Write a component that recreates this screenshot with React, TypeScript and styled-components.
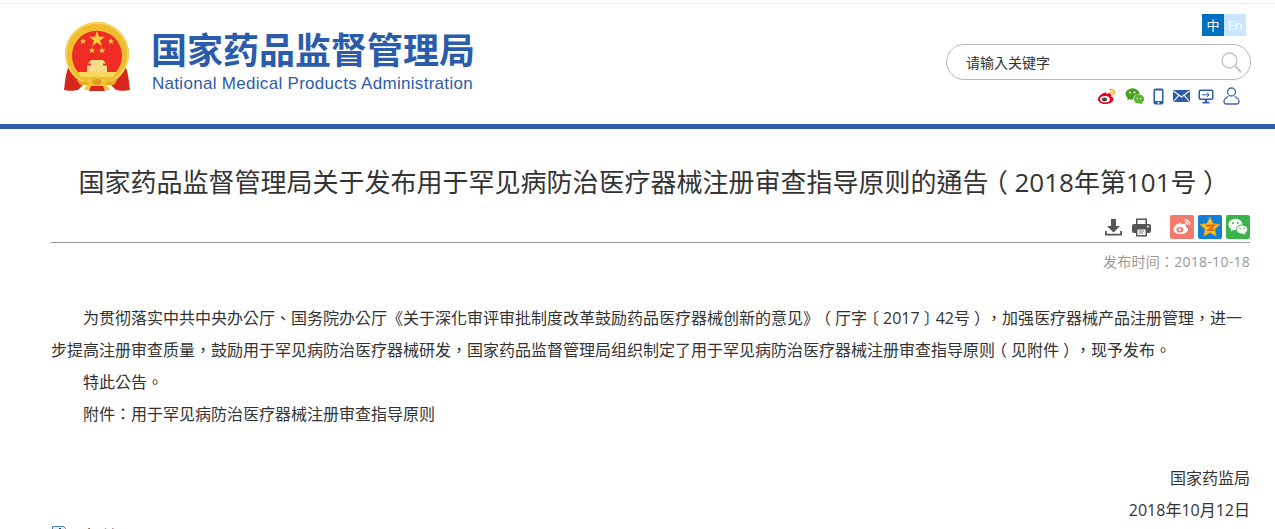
import { createGlobalStyle, styled } from 'styled-components';

const CJK = `"Open Sans", "Noto Sans CJK TC", sans-serif`;

const GlobalStyle = createGlobalStyle`
  html, body {
    margin: 0;
    padding: 0;
    background: #fff;
    overflow: hidden;
  }
  #root {
    height: 529px;
    overflow: hidden;
  }
`;

const Page = styled.div`
  width: 1275px;
  height: 529px;
  overflow: hidden;
  font-family: ${CJK};
  color: #333;
  box-sizing: border-box;
  padding-top: 3px;
  text-spacing-trim: space-all;
`;

const Header = styled.header`
  height: 126px;
  box-sizing: border-box;
  display: flex;
  justify-content: space-between;
  border-top: 1px solid #ededed;
  border-bottom: 5px solid #2b5cab;
`;

const Brand = styled.div`
  display: flex;
  align-items: flex-start;
  padding: 18px 0 0 64px;
  gap: 22px;
`;

const BrandText = styled.div`
  display: flex;
  flex-direction: column;
`;

const BrandCn = styled.div`
  font-family: "Noto Sans CJK SC", sans-serif;
  font-size: 36px;
  font-weight: 700;
  line-height: 54px;
  color: #2b5cab;
  white-space: nowrap;
  margin: -1px 0 0 -1px;
`;

const BrandEn = styled.div`
  font-family: "Liberation Sans", Arial, sans-serif;
  font-size: 17px;
  line-height: 20px;
  letter-spacing: 0.3px;
  color: #2b5cab;
  white-space: nowrap;
  margin-top: -1px;
`;

const Tools = styled.div`
  width: 305px;
  margin-right: 24px;
  display: flex;
  flex-direction: column;
  align-items: flex-end;
`;

const LangRow = styled.div`
  display: flex;
  margin: 10px 5px 0 0;
`;

const Lang = styled.span<{ $active?: boolean }>`
  width: 22px;
  height: 22px;
  display: flex;
  align-items: center;
  justify-content: center;
  font-size: 13px;
  line-height: 22px;
  color: #fff;
  background: ${(p) => (p.$active ? '#0070c0' : '#c8e6ff')};
`;

const Search = styled.div`
  width: 305px;
  height: 36px;
  box-sizing: border-box;
  margin-top: 8px;
  border: 1px solid #b8b8b8;
  border-radius: 18px;
  display: flex;
  align-items: center;
  justify-content: space-between;
  padding: 0 8px 0 19px;
  font-size: 14px;
  color: #333;
`;

const IconRow = styled.div`
  display: flex;
  align-items: center;
  gap: 8.6px;
  margin: 7px 11px 0 0;
`;

const Article = styled.main`
  padding: 0 25px 0 51px;
`;

const Title = styled.h1`
  margin: 0;
  padding-top: 33px;
  font-size: 26px;
  font-weight: 400;
  line-height: 40px;
  color: #333;
  text-align: center;
  white-space: nowrap;
`;

const Actions = styled.div`
  height: 35px;
  box-sizing: border-box;
  display: flex;
  align-items: flex-end;
  justify-content: flex-end;
  gap: 19px;
  border-bottom: 1px solid #999;
  padding-bottom: 3px;
  margin-top: 6px;
`;

const ActionGroup = styled.div<{ $gap: number }>`
  display: flex;
  align-items: center;
  height: 24px;
  gap: ${(p) => p.$gap}px;
`;

const Published = styled.div`
  margin-top: 9px;
  font-size: 14px;
  line-height: 20px;
  letter-spacing: 0.27px;
  color: #999;
  text-align: right;
`;

const Body = styled.div`
  margin-top: 30px;
  font-size: 16px;
  line-height: 32px;
  color: #333;
`;

const Para = styled.p`
  margin: 0;
  text-indent: 32px;
`;

const Sign = styled.p`
  margin: 0;
  text-align: right;
`;

const Spacer = styled.div`
  height: 32px;
`;

// brackets sit in the middle of their cell in the original font
const Bracket = styled.span`
  font-feature-settings: "halt";
  padding: 0 0.25em;
`;

const Attachment = styled.div`
  display: flex;
  align-items: flex-start;
  gap: 18px;
  font-size: 16px;
  line-height: 20px;
  color: #333;
`;

const SearchIcon = () => (
  <svg width="22" height="22" viewBox="0 0 22 22" fill="none" stroke="#c4c4c4">
    <circle cx="9.5" cy="9.5" r="7.5" strokeWidth="1.4" />
    <path d="M15 15l6 6" strokeWidth="2" />
  </svg>
);

const WeiboIcon = () => (
  <svg width="19" height="17" viewBox="0 2 19 17">
    <path
      d="M8.500 6.500C4.500 7.500 1 10.500 1 13.500c0 2.500 3.500 4.500 7.500 4.500 4.500 0 8-2.300 8-5 0-1.500-1.300-2.200-2.500-2.500.5-1.500.2-2.800-1.200-3.200-1-.3-2.500.2-3.500.7 0-1.500-.3-2.200-1.300-1.500z"
      fill="#e2001a"
    />
    <ellipse cx="8" cy="13.300" rx="4.800" ry="3.300" fill="#fff" />
    <ellipse cx="7.500" cy="13.500" rx="2.600" ry="2.100" fill="#444" />
    <path d="M12.500 3.500c3-.6 5.500 1.800 5 5" fill="none" stroke="#f0a818" strokeWidth="1.500" />
    <path d="M13 6c1.600-.3 2.800 1 2.500 2.500" fill="none" stroke="#f0a818" strokeWidth="1.200" />
  </svg>
);

const WechatIcon = () => (
  <svg width="20" height="17" viewBox="0 0 20 17">
    <ellipse cx="7.500" cy="6" rx="7" ry="5.800" fill="#45a01c" />
    <path d="M3 9.500l-.8 3 3.500-2z" fill="#45a01c" />
    <ellipse cx="14" cy="11" rx="5.800" ry="4.800" fill="#fff" />
    <ellipse cx="14" cy="11" rx="5.200" ry="4.500" fill="#5cb531" />
    <path d="M16.500 14.500l1 2-3-1.300z" fill="#5cb531" />
    <circle cx="5" cy="4.500" r="1" fill="#fff" />
    <circle cx="9.500" cy="4.500" r="1" fill="#fff" />
    <circle cx="12.300" cy="10.500" r=".7" fill="#fff" />
    <circle cx="15.700" cy="10.500" r=".7" fill="#fff" />
  </svg>
);

const PhoneIcon = () => (
  <svg width="11" height="17" viewBox="0 0 11 17">
    <rect x=".5" y=".5" width="10" height="16" rx="2" fill="#2b5cab" />
    <rect x="2" y="2.500" width="7" height="10.500" fill="#fff" />
    <circle cx="5.500" cy="14.800" r="1" fill="#fff" />
  </svg>
);

const MailIcon = () => (
  <svg width="17" height="12" viewBox="0 0 17 12">
    <rect width="17" height="12" rx="1" fill="#2b5cab" />
    <path d="M.5 1l8 6 8-6M.5 11.500l5.500-6.300M16.500 11.500L11 5.200" fill="none" stroke="#fff" strokeWidth="1.100" />
  </svg>
);

const ScreenIcon = () => (
  <svg width="16" height="15" viewBox="0 0 16 15">
    <rect x=".5" y=".5" width="15" height="10.500" rx="2" fill="#2b5cab" />
    <rect x="2" y="2" width="12" height="7.500" rx=".8" fill="#fff" />
    <path d="M4 5.800h7M9 3.800l2.200 2-2.200 2" fill="none" stroke="#2b5cab" strokeWidth="1" />
    <path d="M7 11h2v1.800h2.500V14.500h-7v-1.700H7z" fill="#2b5cab" />
  </svg>
);

const UserIcon = () => (
  <svg width="17" height="18" viewBox="0 0 17 18" fill="none" stroke="#3f63ad" strokeWidth="1.300">
    <circle cx="8.500" cy="5" r="4" />
    <path d="M5.500 9.500C3 10.500 1 12 1 14.500 1 16 2 17 3.500 17h10c1.500 0 2.500-1 2.500-2.500 0-2.500-2-4-4.500-5" />
  </svg>
);

const DownloadIcon = () => (
  <svg width="19" height="19" viewBox="0 0 19 19" fill="#555">
    <path d="M7 1h5v7h4l-6.500 6.500L3 8h4z" />
    <path d="M1 13v4.500h17V13h-1.800v2.700H2.800V13z" />
  </svg>
);

const PrintIcon = () => (
  <svg width="19" height="19" viewBox="0 0 19 19">
    <path d="M4 .5h11v6H4z" fill="#555" />
    <rect x="5.500" y="2" width="8" height="4.500" fill="#fff" />
    <rect y="6" width="19" height="9" rx="2" fill="#555" />
    <rect x="4" y="10" width="11" height="8.500" fill="#555" />
    <rect x="5.500" y="11.500" width="8" height="5.500" fill="#fff" />
    <path d="M7 13h5M7 15h4" stroke="#555" strokeWidth=".8" />
    <circle cx="16" cy="8.500" r="1" fill="#fff" />
  </svg>
);

const ShareWeibo = () => (
  <svg width="24" height="24" viewBox="0 0 24 24">
    <rect width="24" height="24" rx="2" fill="#f47b6c" />
    <path
      d="M10 8C6.500 9 3.500 12 3.500 14.500c0 2.500 3 4.500 7 4.500 4.500 0 7.500-2.300 7.500-4.800 0-1.400-1.200-2-2.300-2.300.5-1.500 0-2.700-1.200-3-1-.2-2.300.2-3.200.7 0-1.300-.4-2-1.300-1.600z"
      fill="#fff"
    />
    <ellipse cx="10" cy="14.800" rx="3.600" ry="2.800" fill="#f47b6c" />
    <circle cx="9.800" cy="14.800" r="1.300" fill="#fff" />
    <path d="M14.500 5c3-.6 5.500 1.800 5 5M15 7.500c1.500-.3 2.500.8 2.300 2.300" fill="none" stroke="#fff" strokeWidth="1.300" />
  </svg>
);

const ShareQzone = () => (
  <svg width="24" height="24" viewBox="0 0 24 24">
    <rect width="24" height="24" rx="2" fill="#0f7fd8" />
    <path d="M12 2l3 6.600 7 .8-5.200 4.800 1.500 7L12 17.600l-6.300 3.600 1.500-7L2 9.400l7-.8z" fill="#fbc21a" stroke="#e9941a" strokeWidth=".6" />
    <path d="M8 10.500h8l-5.500 4.500H16" fill="none" stroke="#e2641a" strokeWidth="1.800" />
  </svg>
);

const ShareWechat = () => (
  <svg width="24" height="24" viewBox="0 0 24 24">
    <rect width="24" height="24" rx="2" fill="#3bb54a" />
    <ellipse cx="9.500" cy="9.500" rx="7" ry="5.800" fill="#fff" />
    <path d="M5.500 13.500l-.8 3 3.500-2z" fill="#fff" />
    <ellipse cx="16" cy="14.500" rx="5.600" ry="4.600" fill="#fff" stroke="#3bb54a" />
    <path d="M18.500 18l1 2-3-1.300z" fill="#fff" />
    <circle cx="7" cy="8" r="1" fill="#3bb54a" />
    <circle cx="11.800" cy="8" r="1" fill="#3bb54a" />
    <circle cx="14" cy="13.500" r=".8" fill="#3bb54a" />
    <circle cx="18" cy="13.500" r=".8" fill="#3bb54a" />
  </svg>
);

// 国徽
const Emblem = () => (
  <svg width="66" height="70" viewBox="0 0 66 70">
    {/* 红绶 */}
    <path d="M4 46C1 54 1 62 0 68c4 1 10 1 14 0l8-8-8-12z" fill="#d9261c" />
    <path d="M62 46c3 8 3 16 4 22-4 1-10 1-14 0l-8-8 8-12z" fill="#d9261c" />
    {/* 麦穗环 */}
    <circle cx="33" cy="32" r="32" fill="#f0bd2e" />
    <circle cx="33" cy="32" r="31" fill="none" stroke="#f8d862" strokeWidth="1.500" />
    {/* 红底 */}
    <path d="M14 50a25 25 0 1 1 38 0z" fill="#ee2c24" />
    {/* 五星 */}
    <path d="M33 9l1.900 5.800H41l-4.900 3.600 1.900 5.800-5-3.600-5 3.600 1.900-5.800L25 14.800h6.100z" fill="#f9d23e" />
    <path d="M19 16l.8 2.400h2.500l-2 1.500.8 2.400-2.100-1.500-2.100 1.500.8-2.400-2-1.500h2.500zM47 16l.8 2.400h2.500l-2 1.500.8 2.400-2.100-1.500-2.100 1.500.8-2.400-2-1.500h2.500zM28 25l.8 2.400h2.500l-2 1.500.8 2.400-2.100-1.500-2.100 1.500.8-2.400-2-1.500h2.500zM38 25l.8 2.400h2.500l-2 1.500.8 2.400-2.100-1.500-2.100 1.500.8-2.400-2-1.500h2.500z" fill="#f9d23e" />
    {/* 天安门 */}
    <path d="M27 38h12l3 3.500h-3v2h4v6.500H23v-6.500h4v-2h-3z" fill="#f7dc8a" />
    <path d="M14 50h38l-3 5H17z" fill="#f9d860" />
    {/* 下方结 */}
    <path d="M12 57c8 5 34 5 42 0l-4 6H16z" fill="#e8a820" />
    <path d="M22 56c3 2 5 2 11 2s8 0 11-2l-3 6c2 1 4 3 5 6H20c1-3 3-5 5-6z" fill="#f4c534" />
    <ellipse cx="33" cy="60" rx="5" ry="3" fill="#e39b1c" />
    <path d="M27 64h12l2 5H25z" fill="#d9261c" />
  </svg>
);

const AttachIcon = () => (
  <svg width="16" height="16" viewBox="0 0 16 16">
    <path d="M1.500.5h11l2 2v13h-13z" fill="#eaf1fb" stroke="#4a77c0" />
    <path d="M9 2v6" stroke="#27408b" strokeWidth="2" />
  </svg>
);

export default function App() {
  return (
    <Page>
      <GlobalStyle />
      <Header>
        <Brand>
          <Emblem />
          <BrandText>
            <BrandCn>国家药品监督管理局</BrandCn>
            <BrandEn>National Medical Products Administration</BrandEn>
          </BrandText>
        </Brand>
        <Tools>
          <LangRow>
            <Lang $active>中</Lang>
            <Lang>En</Lang>
          </LangRow>
          <Search>
            <span>请输入关键字</span>
            <SearchIcon />
          </Search>
          <IconRow>
            <WeiboIcon />
            <WechatIcon />
            <PhoneIcon />
            <MailIcon />
            <ScreenIcon />
            <UserIcon />
          </IconRow>
        </Tools>
      </Header>
      <Article>
        <Title>
          国家药品监督管理局关于发布用于罕见病防治医疗器械注册审查指导原则的通告<Bracket>（</Bracket>2018年第101号<Bracket>）</Bracket>
        </Title>
        <Actions>
          <ActionGroup $gap={9}>
            <DownloadIcon />
            <PrintIcon />
          </ActionGroup>
          <ActionGroup $gap={4}>
            <ShareWeibo />
            <ShareQzone />
            <ShareWechat />
          </ActionGroup>
        </Actions>
        <Published>发布时间：2018-10-18</Published>
        <Body>
          <Para>
            为贯彻落实中共中央办公厅、国务院办公厅《关于深化审评审批制度改革鼓励药品医疗器械创新的意见》<Bracket>（</Bracket>厅字<Bracket>〔</Bracket>2017<Bracket>〕</Bracket>42号<Bracket>）</Bracket>，加强医疗器械产品注册管理，进一步提高注册审查质量，鼓励用于罕见病防治医疗器械研发，国家药品监督管理局组织制定了用于罕见病防治医疗器械注册审查指导原则<Bracket>（</Bracket>见附件<Bracket>）</Bracket>，现予发布。
          </Para>
          <Para>特此公告。</Para>
          <Para>附件：用于罕见病防治医疗器械注册审查指导原则</Para>
          <Spacer />
          <Sign>国家药监局</Sign>
          <Sign>2018年10月12日</Sign>
        </Body>
        <Attachment>
          <AttachIcon />
          <span>相关</span>
        </Attachment>
      </Article>
    </Page>
  );
}
